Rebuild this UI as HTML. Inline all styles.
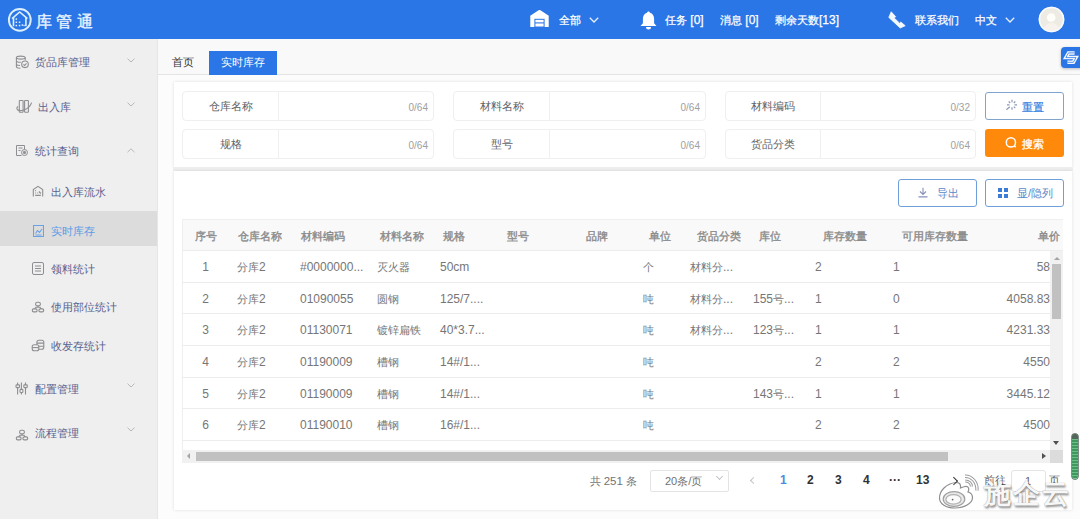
<!DOCTYPE html>
<html><head><meta charset="utf-8">
<style>
*{box-sizing:border-box;margin:0;padding:0}
html,body{width:1080px;height:519px;overflow:hidden;background:#fcfcfc;font-family:"Liberation Sans",sans-serif;font-size:11px;color:#606266}
.abs{position:absolute}
#hdr{position:absolute;left:0;top:0;width:1080px;height:39px;background:#2a76e6;color:#fff;-webkit-text-stroke:0.25px #fff}
#side{position:absolute;left:0;top:39px;width:158px;height:480px;background:#efefef;border-right:1px solid #e6e6e6}
.mi{position:absolute;left:0;width:157px;height:20px;line-height:20px;color:#5a5f8e;font-size:11px;white-space:nowrap}
.mi .t{position:absolute;top:0}
.chev{position:absolute;left:128px;width:5px;height:5px;border-right:1px solid #bcbcbc;border-bottom:1px solid #bcbcbc;transform:rotate(45deg)}
#tabs{position:absolute;left:158px;top:39px;width:922px;height:36px;background:#f9f9f9;border-bottom:1px solid #e4e4e4}
.card{position:absolute;background:#fff;box-shadow:0 0 3px rgba(0,0,0,.12)}
.inp{position:absolute;height:29.5px;border:1px solid #efefef;border-radius:4px;background:#fff}
.inp .lb{position:absolute;left:0;top:0;height:27.5px;line-height:28px;text-align:center;color:#606266;border-right:1px solid #f0f0f0;font-size:11px}
.inp .cnt{position:absolute;right:5px;top:1.5px;line-height:27px;color:#a0a0a0;font-size:10px}
.btn{position:absolute;height:28px;border:1px solid #6f9fd8;border-radius:3px;background:#fff;color:#3c7bd6;font-size:11px;line-height:26px}
table{border-collapse:collapse}
.th{position:absolute;top:220.5px;height:31px;line-height:31px;font-weight:normal;-webkit-text-stroke:0.35px #8a8a8a;color:#8a8a8a;font-size:11px;white-space:nowrap}
.rowline{position:absolute;left:182px;width:881px;height:1px;background:#ececec}
.c{position:absolute;line-height:16px;color:#767676;font-size:11px;white-space:nowrap}
.n{font-size:12px}
.pg{position:absolute;top:472px;line-height:16px;font-weight:bold;color:#303133;font-size:12px}
</style></head><body>

<div id="hdr">
  <svg class="abs" style="left:5px;top:6px" width="30" height="28" viewBox="0 0 30 28">
    <circle cx="14.8" cy="13.9" r="10.9" fill="none" stroke="#dcefff" stroke-width="1.9"/>
    <path d="M8.5 20.3V11.8M20.9 20.3V11.8M7 12.6L14.7 6 22.4 12.6" fill="none" stroke="#dcefff" stroke-width="1.6"/>
    <g fill="#dcefff"><rect x="10.6" y="12.3" width="1.5" height="1.5"/><rect x="10.6" y="15.5" width="1.5" height="1.5"/><rect x="10.6" y="18.8" width="1.5" height="1.5"/><rect x="13.8" y="15.5" width="1.5" height="1.5"/><rect x="13.8" y="18.8" width="1.5" height="1.5"/><rect x="16.6" y="18.3" width="1.5" height="1.5"/><rect x="18.4" y="18.8" width="1.3" height="1.3"/></g>
  </svg>
  <div class="abs" style="left:35.5px;top:10.7px;font-size:16px;line-height:22px;letter-spacing:4.5px;color:#e8f3ff;-webkit-text-stroke:0.4px #e8f3ff">库管通</div>

  <svg class="abs" style="left:530px;top:10px" width="19" height="17" viewBox="0 0 19 17">
    <path d="M0.3 6.6Q0 6 0.6 5.5L8.6 0.3Q9.5 -0.2 10.4 0.3L18.4 5.5Q19 6 18.7 6.6V17H0.3Z" fill="#fff"/>
    <rect x="4.9" y="9.3" width="9.2" height="7.7" fill="none" stroke="#2a76e6" stroke-width="1"/>
    <path d="M5 12.9H14" stroke="#2a76e6" stroke-width="1.1"/>
  </svg>
  <div class="abs" style="left:559px;top:12px;line-height:16px;font-size:11px">全部</div>
  <svg class="abs" style="left:589px;top:16.5px" width="10" height="6" viewBox="0 0 10 6" fill="none" stroke="#e8f0ff" stroke-width="1.3"><path d="M0.8 0.8L5 5L9.2 0.8"/></svg>

  <svg class="abs" style="left:640px;top:10.5px" width="17" height="19" viewBox="0 0 17 19">
    <path d="M8.5 0.5c0.9 0 1.4 0.6 1.4 1.3 2.8 0.7 4.2 3 4.2 6v4.5l2.4 2.7H0.5l2.4-2.7V7.8c0-3 1.4-5.3 4.2-6 0-0.7 0.5-1.3 1.4-1.3z" fill="#fff"/>
    <path d="M6 16h5a2.5 2.5 0 0 1-5 0z" fill="#fff"/>
  </svg>
  <div class="abs" style="left:665px;top:12px;line-height:16px;font-size:11px;white-space:nowrap">任务<span class="n"> [0]</span></div>
  <div class="abs" style="left:720px;top:12px;line-height:16px;font-size:11px;white-space:nowrap">消息<span class="n"> [0]</span></div>
  <div class="abs" style="left:775px;top:12px;line-height:16px;font-size:11px;white-space:nowrap">剩余天数<span class="n">[13]</span></div>

  <svg class="abs" style="left:884px;top:8px" width="26" height="24" viewBox="0 0 26 24">
    <path d="M7.2 3.8L11.6 8.6L10.3 10.1L15.6 15.2L16.8 14L21.2 17.7L16.2 20L4.8 9.4Z" fill="#f2f8ff" stroke="#f2f8ff" stroke-width="0.8" stroke-linejoin="round"/>
  </svg>
  <div class="abs" style="left:915px;top:12px;line-height:16px;font-size:11px">联系我们</div>
  <div class="abs" style="left:975px;top:12px;line-height:16px;font-size:11px">中文</div>
  <svg class="abs" style="left:1005px;top:16.5px" width="10" height="6" viewBox="0 0 10 6" fill="none" stroke="#e8f0ff" stroke-width="1.3"><path d="M0.8 0.8L5 5L9.2 0.8"/></svg>
  <svg class="abs" style="left:1038px;top:6px" width="27" height="27" viewBox="0 0 27 27">
    <circle cx="13.5" cy="13.5" r="12.8" fill="#eeeae4"/>
    <circle cx="13.5" cy="13.5" r="12" fill="none" stroke="#f8fbff" stroke-width="1.6"/>
    <circle cx="13.2" cy="11.5" r="4.3" fill="#fffef8"/>
    <path d="M6 22c1.5-3.5 4.5-5 7.5-5s6 1.5 7.5 5a11 11 0 0 1-15 0z" fill="#f7f3ec"/>
  </svg>
</div>

<div id="side">
  <!-- level 1 items: y centers in page coords; side top = 39 -->
  <svg class="abs" style="left:12px;top:11px" width="24" height="24" viewBox="0 0 24 24" fill="none" stroke="#8e8e92" stroke-width="1.1">
    <ellipse cx="8.8" cy="7.6" rx="4.4" ry="1.5"/><path d="M4.4 7.6v9.2c0 0.8 1.8 1.4 4 1.5M13.2 7.6v2.6M4.4 10.8c0 0.8 1.9 1.5 4.4 1.5M4.4 14c0 0.8 1.6 1.4 3.6 1.5"/><circle cx="13" cy="14.3" r="3.3"/><path d="M11.4 14.3l1.2 1.1 1.9-2"/>
  </svg>
  <div class="mi" style="top:13px"><span class="t" style="left:35px">货品库管理</span></div>
  <svg class="abs" style="left:126.5px;top:19.0px" width="8" height="5" viewBox="0 0 8 5" fill="none" stroke="#b8b8b8" stroke-width="1"><path d="M0.5 0.6L4 4L7.5 0.6"/></svg>

  <svg class="abs" style="left:12px;top:55px" width="24" height="24" viewBox="0 0 24 24" fill="none" stroke="#8e8e92" stroke-width="1.1">
    <rect x="7.3" y="6.5" width="3.8" height="11.8" rx="0.6"/><rect x="12.6" y="6.5" width="3.8" height="11.8" rx="0.6"/><path d="M6 12.3C3.2 14.8 5.8 17.6 11 16.2S18.6 11.6 19.6 8.6"/>
  </svg>
  <div class="mi" style="top:58px"><span class="t" style="left:38px">出入库</span></div>
  <svg class="abs" style="left:126.5px;top:63.3px" width="8" height="5" viewBox="0 0 8 5" fill="none" stroke="#b8b8b8" stroke-width="1"><path d="M0.5 0.6L4 4L7.5 0.6"/></svg>

  <svg class="abs" style="left:16px;top:106px" width="12" height="11" viewBox="0 0 12 11" fill="none" stroke="#8e8e92" stroke-width="1">
    <path d="M0.5 0.5h8v4M0.5 0.5v10h5M2.5 3h4M2.5 5.5h2"/><circle cx="8.5" cy="7.5" r="3"/><circle cx="8.5" cy="7.5" r="1.2" fill="#8e8e92"/>
  </svg>
  <div class="mi" style="top:102px"><span class="t" style="left:35px">统计查询</span></div>
  <svg class="abs" style="left:126.5px;top:108.6px" width="8" height="5" viewBox="0 0 8 5" fill="none" stroke="#b8b8b8" stroke-width="1"><path d="M0.5 4.2L4 0.8L7.5 4.2"/></svg>

  <svg class="abs" style="left:28px;top:141px" width="24" height="24" viewBox="0 0 24 24" fill="none" stroke="#8e8e92" stroke-width="1.1">
    <path d="M5.3 16.5V9.6L10 6.3l4.7 3.3v6.9"/><path d="M7.2 10.6h0.9M7.2 13h0.9M9.3 13h0.9M7.2 15.4h5.6M11 11.5l1.8 2" stroke-width="1.2"/>
  </svg>
  <div class="mi" style="top:143px"><span class="t" style="left:51px">出入库流水</span></div>

  <div class="abs" style="left:0;top:172px;width:157px;height:35px;background:#dcdcdc"></div>
  <svg class="abs" style="left:33px;top:186px" width="11" height="12" viewBox="0 0 11 12" fill="none" stroke="#6aa2e8" stroke-width="1.1">
    <path d="M0.5 0.5h10v11H0.5z"/><path d="M2.5 8.5l2-3 2 2 2.5-3.5M2.5 10h6"/>
  </svg>
  <div class="mi" style="top:182px;color:#5b9be6"><span class="t" style="left:51px">实时库存</span></div>

  <svg class="abs" style="left:32px;top:223px" width="12" height="13" viewBox="0 0 12 13" fill="none" stroke="#8e8e92" stroke-width="1">
    <rect x="0.5" y="0.5" width="11" height="12" rx="1.5"/><path d="M3 4h6M3 6.5h6M3 9h6"/>
  </svg>
  <div class="mi" style="top:220px"><span class="t" style="left:51px">领料统计</span></div>

  <svg class="abs" style="left:28px;top:257px" width="20" height="20" viewBox="0 0 20 20" fill="none" stroke="#8e8e92" stroke-width="1.1"><rect x="7.6" y="6.3" width="4.8" height="3.6" rx="1.6"/><rect x="4.3" y="12.9" width="4.8" height="3" rx="1.3"/><rect x="10.9" y="12.9" width="4.8" height="3" rx="1.3"/><path d="M10 9.9V11.2M6.7 12.9L8 11.2H12L13.3 12.9"/></svg>
  <div class="mi" style="top:258px"><span class="t" style="left:51px">使用部位统计</span></div>

  <svg class="abs" style="left:28px;top:297px" width="20" height="20" viewBox="0 0 20 20" fill="none" stroke="#8e8e92" stroke-width="1.1"><rect x="8.9" y="4.2" width="6.9" height="9.1" rx="2"/><path d="M8.9 7.1H15.8M10.8 10.2H15.8"/><rect x="4.2" y="8.7" width="6.6" height="6" rx="2" fill="#efefef"/><path d="M4.2 11.6H10.8"/></svg>
  <div class="mi" style="top:297px"><span class="t" style="left:51px">收发存统计</span></div>

  <svg class="abs" style="left:12px;top:339px" width="20" height="20" viewBox="0 0 20 20" fill="none" stroke="#8e8e92" stroke-width="1.1"><path d="M5.6 4.6V6.9M5.6 9.6V16.6M9.4 4.6V11.4M9.4 14.5V16.6M13.5 4.6V6.9M13.5 9.6V16.6"/><rect x="4" y="6.9" width="3.5" height="2.7" rx="0.8"/><rect x="8" y="11.4" width="2.9" height="3.1" rx="0.8"/><rect x="11.8" y="6.9" width="3.5" height="2.7" rx="0.8"/></svg>
  <div class="mi" style="top:340px"><span class="t" style="left:35px">配置管理</span></div>
  <svg class="abs" style="left:126.5px;top:344.0px" width="8" height="5" viewBox="0 0 8 5" fill="none" stroke="#b8b8b8" stroke-width="1"><path d="M0.5 0.6L4 4L7.5 0.6"/></svg>

  <svg class="abs" style="left:12px;top:385px" width="20" height="20" viewBox="0 0 20 20" fill="none" stroke="#8e8e92" stroke-width="1.1"><rect x="7.6" y="6.3" width="4.8" height="3.6" rx="1.6"/><rect x="4.3" y="12.9" width="4.8" height="3" rx="1.3"/><rect x="10.9" y="12.9" width="4.8" height="3" rx="1.3"/><path d="M10 9.9V11.2M6.7 12.9L8 11.2H12L13.3 12.9"/></svg>
  <div class="mi" style="top:384px"><span class="t" style="left:35px">流程管理</span></div>
  <svg class="abs" style="left:126.5px;top:388.0px" width="8" height="5" viewBox="0 0 8 5" fill="none" stroke="#b8b8b8" stroke-width="1"><path d="M0.5 0.6L4 4L7.5 0.6"/></svg>
</div>

<div id="tabs">
  <div class="abs" style="left:14px;top:15px;line-height:16px;color:#333;font-size:11px">首页</div>
  <div class="abs" style="left:51px;top:12px;width:68px;height:24px;background:#2a76e6;color:#fff;line-height:22px;text-align:center;font-size:11px">实时库存</div>
</div>

<!-- floating icon -->
<div class="abs" style="left:1061px;top:47px;width:24px;height:21px;background:#2a76e6;border-radius:4px;box-shadow:0 1px 3px rgba(0,0,0,.25)"></div>
<svg class="abs" style="left:1061px;top:47px" width="19" height="21" viewBox="0 0 19 21" fill="none" stroke="#f4f9ff" stroke-width="1.8" stroke-linejoin="miter">
  <path d="M13.6 5.9H7.5L4.9 10.6H15L12.4 15.3H6.4" stroke-width="3.5"/><path d="M13.6 5.9H7.5L4.9 10.6H15L12.4 15.3H6.4" stroke="#2a76e6" stroke-width="0.75"/>
</svg>

<!-- search card -->
<div class="card" style="left:174px;top:82px;width:898px;height:84.5px"></div>
<div class="inp" style="left:182px;top:91px;width:252px"><div class="lb" style="width:96px">仓库名称</div><div class="cnt">0/64</div></div>
<div class="inp" style="left:453px;top:91px;width:253px"><div class="lb" style="width:96px">材料名称</div><div class="cnt">0/64</div></div>
<div class="inp" style="left:725px;top:91px;width:251px"><div class="lb" style="width:95px">材料编码</div><div class="cnt">0/32</div></div>
<div class="inp" style="left:182px;top:129px;width:252px"><div class="lb" style="width:96px">规格</div><div class="cnt">0/64</div></div>
<div class="inp" style="left:453px;top:129px;width:253px"><div class="lb" style="width:96px">型号</div><div class="cnt">0/64</div></div>
<div class="inp" style="left:725px;top:129px;width:251px"><div class="lb" style="width:95px">货品分类</div><div class="cnt">0/64</div></div>

<div class="btn" style="left:985px;top:91.5px;width:79px;height:28.5px;border-color:#80a4cc"></div>
<svg class="abs" style="left:1002px;top:96px" width="20" height="20" viewBox="0 0 20 20" stroke="#8c9ab4" stroke-width="1.2" fill="none">
  <path d="M10 3.8V6.3M10 11.3V13.8M5 8.8H7.5M12.5 8.8H15M11.8 7L13.3 5.5M8.2 7L6.7 5.5M11.8 10.6L13.3 12.1M4.4 13.7L7.8 10.8"/>
</svg>
<div class="abs" style="left:1022px;top:98.5px;line-height:16px;color:#2f7be0;font-size:11px;-webkit-text-stroke:0.15px #2f7be0">重置</div>

<div class="abs" style="left:985px;top:129px;width:79px;height:28px;background:#ff890a;border-radius:3px"></div>
<svg class="abs" style="left:1005px;top:136px" width="13" height="13" viewBox="0 0 13 13" stroke="#fff" stroke-width="1.3" fill="none">
  <circle cx="5.9" cy="6.4" r="4.6" stroke-width="1.5"/><path d="M9.2 9.8l1.6 1.5" stroke-width="1.5"/>
</svg>
<div class="abs" style="left:1022px;top:136px;line-height:16px;color:#fff;font-size:11px;-webkit-text-stroke:0.3px #fff">搜索</div>

<!-- table card -->
<div class="abs" style="left:173px;top:166.5px;width:900px;height:4px;background:#eeeeee"></div>
<div class="card" style="left:174px;top:171px;width:898px;height:339px"></div>
<div class="btn" style="left:898px;top:178.5px;width:79px;height:28.5px"></div>
<svg class="abs" style="left:918px;top:187px" width="10" height="11" viewBox="0 0 10 11" stroke="#8890bb" stroke-width="1.1" fill="none">
  <path d="M5 0.8v6.5M2 4.5l3 3 3-3M0.5 9.9h9"/>
</svg>
<div class="abs" style="left:937px;top:185px;line-height:16px;color:#5a88c8;font-size:11px">导出</div>
<div class="btn" style="left:985px;top:178.5px;width:79px;height:28.5px"></div>
<svg class="abs" style="left:998px;top:188px" width="10" height="10" viewBox="0 0 10 10" fill="#3c7bd6">
  <rect x="0" y="0" width="4" height="4"/><rect x="6" y="0" width="4" height="4"/><rect x="0" y="6" width="4" height="4"/><rect x="6" y="6" width="4" height="4"/>
</svg>
<div class="abs" style="left:1017px;top:185px;line-height:16px;color:#5a88c8;font-size:11px">显/隐列</div>

<!-- table -->
<div class="abs" style="left:182px;top:219px;width:881px;height:31px;background:#f9f9f9;border-top:1px solid #efefef"></div>
<div class="abs" style="left:182px;top:219px;width:1px;height:231px;background:#efefef"></div>
<div class="th" style="left:195px">序号</div>
<div class="th" style="left:238px">仓库名称</div>
<div class="th" style="left:301px">材料编码</div>
<div class="th" style="left:380px">材料名称</div>
<div class="th" style="left:443px">规格</div>
<div class="th" style="left:507px">型号</div>
<div class="th" style="left:586px">品牌</div>
<div class="th" style="left:649px">单位</div>
<div class="th" style="left:697px">货品分类</div>
<div class="th" style="left:759px">库位</div>
<div class="th" style="left:823px">库存数量</div>
<div class="th" style="left:902px">可用库存数量</div>
<div class="th" style="left:1038px">单价</div>

<div class="rowline" style="top:250px"></div>
<div class="rowline" style="top:282px"></div>
<div class="rowline" style="top:313px"></div>
<div class="rowline" style="top:345px"></div>
<div class="rowline" style="top:377px"></div>
<div class="rowline" style="top:408px"></div>
<div class="rowline" style="top:440px"></div>

<div id="rows">
<div class="c" style="left:190px;width:31px;text-align:center;top:258.7px"><span class="n">1</span></div>
<div class="c" style="left:237px;top:258.7px">分库<span class="n">2</span></div>
<div class="c" style="left:300px;top:258.7px"><span class="n">#0000000...</span></div>
<div class="c" style="left:377px;top:258.7px">灭火器</div>
<div class="c" style="left:440px;top:258.7px"><span class="n">50cm</span></div>
<div class="c" style="left:643px;top:258.7px">个</div>
<div class="c" style="left:690px;top:258.7px">材料分<span class="n">...</span></div>
<div class="c" style="left:815px;top:258.7px"><span class="n">2</span></div>
<div class="c" style="left:893px;top:258.7px"><span class="n">1</span></div>
<div class="c" style="right:30px;text-align:right;top:258.7px"><span class="n">58</span></div>
<div class="c" style="left:190px;width:31px;text-align:center;top:290.5px"><span class="n">2</span></div>
<div class="c" style="left:237px;top:290.5px">分库<span class="n">2</span></div>
<div class="c" style="left:300px;top:290.5px"><span class="n">01090055</span></div>
<div class="c" style="left:377px;top:290.5px">圆钢</div>
<div class="c" style="left:440px;top:290.5px"><span class="n">125/7....</span></div>
<div class="c" style="left:643px;top:290.5px">吨</div>
<div class="c" style="left:690px;top:290.5px">材料分<span class="n">...</span></div>
<div class="c" style="left:753px;top:290.5px"><span class="n">155</span>号<span class="n">...</span></div>
<div class="c" style="left:815px;top:290.5px"><span class="n">1</span></div>
<div class="c" style="left:893px;top:290.5px"><span class="n">0</span></div>
<div class="c" style="right:30px;text-align:right;top:290.5px"><span class="n">4058.83</span></div>
<div class="c" style="left:190px;width:31px;text-align:center;top:322.0px"><span class="n">3</span></div>
<div class="c" style="left:237px;top:322.0px">分库<span class="n">2</span></div>
<div class="c" style="left:300px;top:322.0px"><span class="n">01130071</span></div>
<div class="c" style="left:377px;top:322.0px">镀锌扁铁</div>
<div class="c" style="left:440px;top:322.0px"><span class="n">40*3.7...</span></div>
<div class="c" style="left:643px;top:322.0px">吨</div>
<div class="c" style="left:690px;top:322.0px">材料分<span class="n">...</span></div>
<div class="c" style="left:753px;top:322.0px"><span class="n">123</span>号<span class="n">...</span></div>
<div class="c" style="left:815px;top:322.0px"><span class="n">1</span></div>
<div class="c" style="left:893px;top:322.0px"><span class="n">1</span></div>
<div class="c" style="right:30px;text-align:right;top:322.0px"><span class="n">4231.33</span></div>
<div class="c" style="left:190px;width:31px;text-align:center;top:353.8px"><span class="n">4</span></div>
<div class="c" style="left:237px;top:353.8px">分库<span class="n">2</span></div>
<div class="c" style="left:300px;top:353.8px"><span class="n">01190009</span></div>
<div class="c" style="left:377px;top:353.8px">槽钢</div>
<div class="c" style="left:440px;top:353.8px"><span class="n">14#/1...</span></div>
<div class="c" style="left:643px;top:353.8px">吨</div>
<div class="c" style="left:815px;top:353.8px"><span class="n">2</span></div>
<div class="c" style="left:893px;top:353.8px"><span class="n">2</span></div>
<div class="c" style="right:30px;text-align:right;top:353.8px"><span class="n">4550</span></div>
<div class="c" style="left:190px;width:31px;text-align:center;top:385.7px"><span class="n">5</span></div>
<div class="c" style="left:237px;top:385.7px">分库<span class="n">2</span></div>
<div class="c" style="left:300px;top:385.7px"><span class="n">01190009</span></div>
<div class="c" style="left:377px;top:385.7px">槽钢</div>
<div class="c" style="left:440px;top:385.7px"><span class="n">14#/1...</span></div>
<div class="c" style="left:643px;top:385.7px">吨</div>
<div class="c" style="left:753px;top:385.7px"><span class="n">143</span>号<span class="n">...</span></div>
<div class="c" style="left:815px;top:385.7px"><span class="n">1</span></div>
<div class="c" style="left:893px;top:385.7px"><span class="n">1</span></div>
<div class="c" style="right:30px;text-align:right;top:385.7px"><span class="n">3445.12</span></div>
<div class="c" style="left:190px;width:31px;text-align:center;top:416.8px"><span class="n">6</span></div>
<div class="c" style="left:237px;top:416.8px">分库<span class="n">2</span></div>
<div class="c" style="left:300px;top:416.8px"><span class="n">01190010</span></div>
<div class="c" style="left:377px;top:416.8px">槽钢</div>
<div class="c" style="left:440px;top:416.8px"><span class="n">16#/1...</span></div>
<div class="c" style="left:643px;top:416.8px">吨</div>
<div class="c" style="left:815px;top:416.8px"><span class="n">2</span></div>
<div class="c" style="left:893px;top:416.8px"><span class="n">2</span></div>
<div class="c" style="right:30px;text-align:right;top:416.8px"><span class="n">4500</span></div>
</div><!--/rows-->

<!-- scrollbars -->
<div class="abs" style="left:1050px;top:251px;width:13px;height:199px;background:#f1f1f1"></div>
<div class="abs" style="left:1052px;top:264px;width:9px;height:55px;background:#c1c1c1"></div>
<div class="abs" style="left:1054px;top:257px;width:0;height:0;border-left:3px solid transparent;border-right:3px solid transparent;border-bottom:3px solid #a3a3a3"></div>
<div class="abs" style="left:1053px;top:441px;width:0;height:0;border-left:3.5px solid transparent;border-right:3.5px solid transparent;border-top:4px solid #505050"></div>
<div class="abs" style="left:182px;top:450px;width:868px;height:13px;background:#f1f1f1"></div>
<div class="abs" style="left:196px;top:452px;width:752px;height:9px;background:#c1c1c1"></div>
<div class="abs" style="left:187px;top:453px;width:0;height:0;border-top:3px solid transparent;border-bottom:3px solid transparent;border-right:3px solid #a3a3a3"></div>
<div class="abs" style="left:1042px;top:453px;width:0;height:0;border-top:3.5px solid transparent;border-bottom:3.5px solid transparent;border-left:4px solid #505050"></div>
<div class="abs" style="left:1050px;top:450px;width:13px;height:13px;background:#dcdcdc"></div>

<!-- pagination -->
<div class="abs" style="left:589.5px;top:473px;line-height:16px;color:#737373;font-size:11px;white-space:nowrap">共<span class="n" style="font-size:11.5px"> 251 </span>条</div>
<div class="abs" style="left:650px;top:470px;width:79px;height:22px;border:1px solid #e4e4e4;border-radius:2px"></div>
<div class="abs" style="left:665px;top:473px;line-height:16px;color:#707070;font-size:11px;white-space:nowrap">20条/页</div>
<div class="abs" style="left:717px;top:474px;width:5px;height:5px;border-right:1px solid #c0c4cc;border-bottom:1px solid #c0c4cc;transform:rotate(45deg)"></div>
<div class="abs" style="left:751px;top:478px;width:5px;height:5px;border-left:1px solid #c0c4cc;border-bottom:1px solid #c0c4cc;transform:rotate(45deg)"></div>
<div class="pg" style="left:780px;color:#4a8de0">1</div>
<div class="pg" style="left:807px">2</div>
<div class="pg" style="left:835px">3</div>
<div class="pg" style="left:863px">4</div>
<div class="pg" style="left:889px">···</div>
<div class="pg" style="left:916px">13</div>
<div class="abs" style="left:984px;top:472px;line-height:16px;color:#606266;font-size:11px">前往</div>
<div class="abs" style="left:1011px;top:470px;width:35px;height:22px;border:1px solid #e4e4e4;border-radius:3px"></div>
<div class="abs" style="left:1025px;top:473px;line-height:16px;color:#606266;font-size:11px">1</div>
<div class="abs" style="left:1049px;top:472px;line-height:16px;color:#606266;font-size:11px">页</div>

<!-- watermark -->
<svg class="abs" style="left:938px;top:474px" width="42" height="35" viewBox="0 0 42 35">
  <g stroke="#8f8f8f" stroke-width="1.2">
    <path d="M18 8.5C8 9.5 1.5 17 1.5 24C1.5 30 8 34 17 34C27 34 34.5 29 34.5 23.5C34.5 20 32 18.5 30 18C31.5 15 31 12 27 12.5C25 13 23.5 13.5 22.5 14C23 10 21.5 8.5 18 8.5Z" fill="rgba(255,255,255,0.55)"/>
    <ellipse cx="16" cy="25" rx="10.8" ry="7.4" fill="rgba(225,225,225,0.75)" stroke="#a0a0a0"/>
    <ellipse cx="15.5" cy="25.4" rx="7.6" ry="4.8" fill="rgba(255,255,255,0.8)" stroke="#b0b0b0"/>
    <path d="M27 2.2C34 2 39.5 8.5 39 16.5" fill="none" stroke="#9a9a9a" stroke-width="3.4"/>
    <path d="M27.3 7C31 7 33.5 9.5 33.4 12.5" fill="none" stroke="#9a9a9a" stroke-width="3"/>
    <path d="M27 2.2C34 2 39.5 8.5 39 16.5" fill="none" stroke="#fff" stroke-width="1.4"/>
    <path d="M27.3 7C31 7 33.5 9.5 33.4 12.5" fill="none" stroke="#fff" stroke-width="1.1"/>
  </g>
  <circle cx="14.6" cy="25.6" r="0.9" fill="#666"/>
</svg>
<div class="abs" style="left:983.5px;top:477.5px;font-size:26.5px;line-height:32px;letter-spacing:2.2px;color:#f7f7f7;font-weight:bold;text-shadow:0 0 1px rgba(0,0,0,.45),1px 1.5px 2px rgba(0,0,0,.4)">施企云</div>

<div class="abs" style="left:950.5px;top:477.5px;width:5.5px;height:5.5px;border-right:1.3px solid #303133;border-top:1.3px solid #303133;transform:rotate(45deg)"></div>
<!-- green indicator -->
<div class="abs" style="left:1072.3px;top:434px;width:6px;height:44.5px;border-radius:3px;background:repeating-linear-gradient(#3e9860 0 2px,#6cbf88 2px 3px);box-shadow:0 0 0 0.7px #4d5f55"></div>
<div class="abs" style="left:1072.3px;top:434px;width:6px;height:5px;border-radius:3px 3px 0 0;background:linear-gradient(#5a5f5c,#4f6a58)"></div>

</body></html>
